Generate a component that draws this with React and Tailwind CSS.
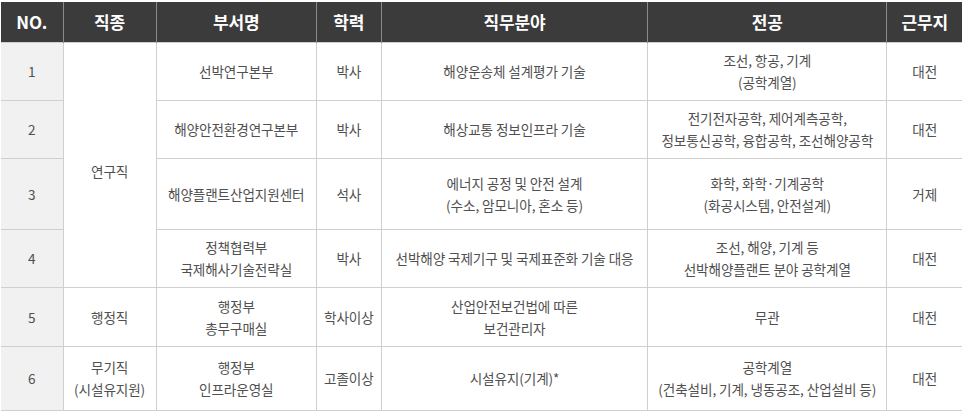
const cols = [62, 93, 160, 65, 266, 239, 75]
const heads = ['NO.', '직종', '부서명', '학력', '직무분야', '전공', '근무지']

const rows = [
  { no: '1', h: 58, dept: ['선박연구본부'], edu: '박사', job: ['해양운송체 설계평가 기술'], major: ['조선, 항공, 기계', '(공학계열)'], loc: '대전' },
  { no: '2', h: 58, dept: ['해양안전환경연구본부'], edu: '박사', job: ['해상교통 정보인프라 기술'], major: ['전기전자공학, 제어계측공학,', '정보통신공학, 융합공학, 조선해양공학'], loc: '대전' },
  { no: '3', h: 71, dept: ['해양플랜트산업지원센터'], edu: '석사', job: ['에너지 공정 및 안전 설계', '(수소, 암모니아, 혼소 등)'], major: ['화학, 화학·기계공학', '(화공시스템, 안전설계)'], loc: '거제' },
  { no: '4', h: 58, dept: ['정책협력부', '국제해사기술전략실'], edu: '박사', job: ['선박해양 국제기구 및 국제표준화 기술 대응'], major: ['조선, 해양, 기계 등', '선박해양플랜트 분야 공학계열'], loc: '대전' },
  { no: '5', h: 59, kind: ['행정직'], dept: ['행정부', '총무구매실'], edu: '학사이상', job: ['산업안전보건법에 따른', '보건관리자'], major: ['무관'], loc: '대전' },
  { no: '6', h: 64, kind: ['무기직', '(시설유지원)'], dept: ['행정부', '인프라운영실'], edu: '고졸이상', job: ['시설유지(기계)*'], major: ['공학계열', '(건축설비, 기계, 냉동공조, 산업설비 등)'], loc: '대전' },
]

function Lines({ items }) {
  return items.map((t, i) => <div key={i}>{t}</div>)
}

const td = 'border border-[#cfcfcf] text-center align-middle px-0.5'

export default function App() {
  return (
    <div className="bg-white w-[966px] h-[414px] pt-[2px] pl-[1px]" style={{ fontFamily: '"Noto Sans CJK KR", "Noto Sans", sans-serif' }}>
      <table className="table-fixed border-collapse text-[13.6px] leading-[22px] text-[#505050] tracking-[-0.1px]" style={{ width: 961 }}>
        <colgroup>
          {cols.map((w, i) => <col key={i} style={{ width: w }} />)}
        </colgroup>
        <thead>
          <tr className="h-[40px] bg-[#3b3b3b]">
            {heads.map((h, i) => (
              <th key={i} className="border-x border-[#8a8a8a] first:border-l-0 last:border-r-0 text-white text-[17px] font-bold">{h}</th>
            ))}
          </tr>
        </thead>
        <tbody>
          {rows.map((r, idx) => (
            <tr key={r.no} style={{ height: r.h }} className={idx === rows.length - 1 ? 'border-b border-[#8f8f8f]' : ''}>
              <td className={`${td} border-l-0 bg-[#f1f1f1]`}>{r.no}</td>
              {idx === 0 && <td rowSpan={4} className={`${td} pt-[12px]`}>연구직</td>}
              {r.kind && <td className={td}><Lines items={r.kind} /></td>}
              <td className={td}><Lines items={r.dept} /></td>
              <td className={td}>{r.edu}</td>
              <td className={td}><Lines items={r.job} /></td>
              <td className={td}><Lines items={r.major} /></td>
              <td className={`${td} border-r-0`}>{r.loc}</td>
            </tr>
          ))}
        </tbody>
      </table>
    </div>
  )
}
